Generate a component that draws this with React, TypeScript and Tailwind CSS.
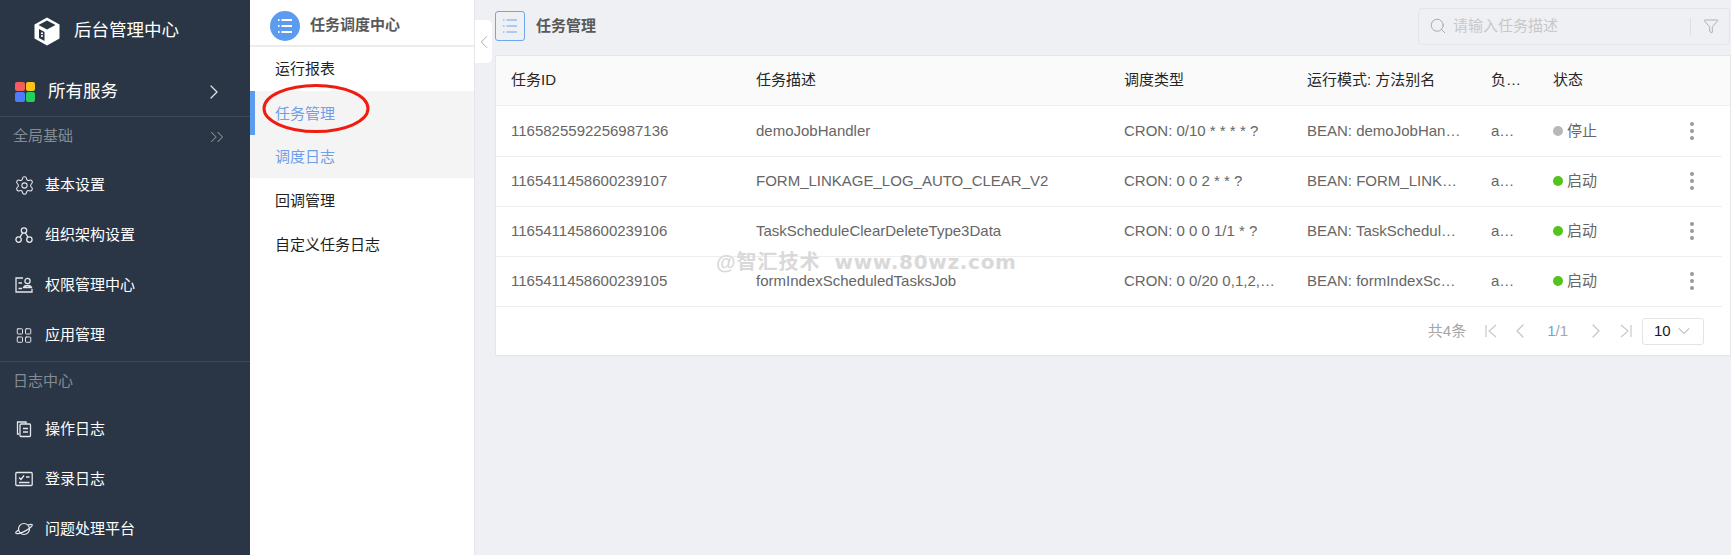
import { ChevronRight, ChevronsRight, ChevronLeft, ChevronDown, Settings, Search, Filter, LayoutGrid } from "lucide-react";
import type { ReactNode } from "react";

const FONT = "font-['Liberation_Sans','Noto_Sans_CJK_SC',sans-serif]";

const CubeLogo = () => (
  <svg width="26" height="29" viewBox="0 0 26 29" fill="none" className="mt-[2px]">
    <path d="M13 0.5 L25.5 7.5 V21.5 L13 28.5 L0.5 21.5 V7.5 Z" fill="#fff" />
    <path d="M13 3.5 L21.5 8 L13 12.5 L4.5 8 Z" fill="#2a3645" />
    <path d="M5 12 L10.5 15 V24 L5 21 Z" fill="#2a3645" />
    <rect x="7" y="15.5" width="2" height="1.6" fill="#fff" />
    <rect x="7" y="18.2" width="2" height="1.6" fill="#fff" />
  </svg>
);

const ServiceGrid = () => (
  <div className="grid grid-cols-2 gap-[1px] w-[20px] h-[20px]">
    <span className="rounded-[2px] bg-[#f55d5d]" />
    <span className="rounded-[2px] bg-[#fcc419]" />
    <span className="rounded-[2px] bg-[#4c7dfb]" />
    <span className="rounded-[2px] bg-[#22d15a]" />
  </div>
);

const OrgIcon = () => (
  <svg width="18" height="18" viewBox="0 0 18 18" fill="none" stroke="#e5e7eb" strokeWidth="1.3">
    <circle cx="9" cy="4.5" r="2.7" />
    <circle cx="3.6" cy="13.6" r="2.7" />
    <circle cx="14.4" cy="13.6" r="2.7" />
    <path d="M7.6 7 L5 11.2 M10.4 7 L13 11.2" />
  </svg>
);

const PermIcon = () => (
  <svg width="18" height="18" viewBox="0 0 18 18" fill="none" stroke="#e5e7eb" strokeWidth="1.3">
    <path d="M8 2 H1 V16 H17 V13" />
    <circle cx="12.5" cy="5" r="2.6" />
    <path d="M8.5 11.5 C9.5 8.8 15.5 8.8 16.5 11.5 Z" />
    <path d="M3.5 7 H7 M3.5 12.5 H7" />
  </svg>
);

const LogIcon = () => (
  <svg width="18" height="18" viewBox="0 0 18 18" fill="none" stroke="#e5e7eb" strokeWidth="1.3">
    <path d="M4 14 H2.5 V2 H11 V4" />
    <rect x="5" y="4" width="10.5" height="12.5" rx="1" />
    <path d="M8 8.5 H13 M8 12 H13" />
  </svg>
);

const LoginIcon = () => (
  <svg width="18" height="16" viewBox="0 0 18 16" fill="none" stroke="#e5e7eb" strokeWidth="1.3">
    <rect x="0.8" y="1.5" width="16.4" height="13" rx="1" />
    <path d="M4 6.5 L6 8.5 L9 4.5 M11 6 H14.5 M4 11.5 H14.5" />
  </svg>
);

const PlanetIcon = () => (
  <svg width="19" height="16" viewBox="0 0 19 16" fill="none" stroke="#e5e7eb" strokeWidth="1.3">
    <circle cx="9.5" cy="8" r="5.8" />
    <path d="M4.2 8.8 C1.8 10.2 0.4 11.6 0.9 12.4 C1.7 13.6 6.4 12.6 11 10 C15.6 7.4 18.9 4.6 18.1 3.5 C17.6 2.8 16 3 14 3.7" />
  </svg>
);

const ListIcon = ({ color, size, weight }: { color: string; size: number; weight: number }) => (
  <svg width={size} height={size} viewBox="0 0 18 18" fill="none" stroke={color} strokeWidth={weight}>
    <path d="M5.5 3 H16 M5.5 9 H16 M5.5 15 H16 M2 3 H3.5 M2 9 H3.5 M2 15 H3.5" />
  </svg>
);

const Kebab = () => (
  <div className="flex flex-col gap-[3.5px]">
    <span className="w-[3.5px] h-[3.5px] rounded-full bg-[#999999]" />
    <span className="w-[3.5px] h-[3.5px] rounded-full bg-[#999999]" />
    <span className="w-[3.5px] h-[3.5px] rounded-full bg-[#999999]" />
  </div>
);

const NavItem = ({ icon, label }: { icon: ReactNode; label: string }) => (
  <div className="flex items-center h-[50px] pl-[15px]">
    <span className="w-[18px] flex justify-center">{icon}</span>
    <span className="ml-[12px] text-[15px] text-white">{label}</span>
  </div>
);

const rows = [
  {
    id: "1165825592256987136",
    desc: "demoJobHandler",
    cron: "CRON: 0/10 * * * * ?",
    bean: "BEAN: demoJobHandler",
    on: false,
  },
  {
    id: "1165411458600239107",
    desc: "FORM_LINKAGE_LOG_AUTO_CLEAR_V2",
    cron: "CRON: 0 0 2 * * ?",
    bean: "BEAN: FORM_LINKAGE_LOG_AUTO_CLEAR_V2",
    on: true,
  },
  {
    id: "1165411458600239106",
    desc: "TaskScheduleClearDeleteType3Data",
    cron: "CRON: 0 0 0 1/1 * ?",
    bean: "BEAN: TaskScheduleClearDeleteType3Data",
    on: true,
  },
  {
    id: "1165411458600239105",
    desc: "formIndexScheduledTasksJob",
    cron: "CRON: 0 0/20 0,1,2,3,4,5 * * ?",
    bean: "BEAN: formIndexScheduledTasksJob",
    on: true,
  },
];

const gridCols = "grid grid-cols-[245px_368px_183px_184px_62px_137px_1fr] items-center";

const App = () => {
  return (
    <div className={`${FONT} relative flex w-[1731px] h-[555px] overflow-hidden bg-[#eef0f4]`}>
      {/* dark sidebar */}
      <aside className="w-[250px] shrink-0 bg-[#2a3645] text-white">
        <div className="flex items-center h-[60px] pl-[34px]">
          <CubeLogo />
          <span className="ml-[14px] text-[17.5px]">后台管理中心</span>
        </div>
        <div className="flex items-center justify-between h-[57px] pt-[7px] pl-[15px] pr-[24px] border-b border-[#3d4958]">
          <div className="flex items-center">
            <ServiceGrid />
            <span className="ml-[13px] text-[17.5px]">所有服务</span>
          </div>
          <ChevronRight size={24} strokeWidth={1.2} className="text-[#e5e7eb]" />
        </div>
        <div className="flex items-center justify-between h-[43px] pl-[13px] pr-[22px] pb-[4px] text-[15px] text-[#858b93]">
          <span>全局基础</span>
          <ChevronsRight size={22} strokeWidth={1.1} />
        </div>
        <NavItem icon={<Settings size={21} strokeWidth={1.2} className="shrink-0 text-[#e5e7eb]" />} label="基本设置" />
        <NavItem icon={<OrgIcon />} label="组织架构设置" />
        <NavItem icon={<PermIcon />} label="权限管理中心" />
        <NavItem icon={<LayoutGrid size={19} strokeWidth={1.3} className="text-[#e5e7eb]" />} label="应用管理" />
        <div className="flex items-center h-[43px] mt-[1px] pl-[13px] pb-[3px] border-t border-[#3d4958] text-[15px] text-[#858b93]">
          日志中心
        </div>
        <NavItem icon={<LogIcon />} label="操作日志" />
        <NavItem icon={<LoginIcon />} label="登录日志" />
        <NavItem icon={<PlanetIcon />} label="问题处理平台" />
      </aside>

      {/* sub menu */}
      <nav className="w-[225px] shrink-0 bg-white border-r border-[#e4e6eb] text-[15px] text-[#1f1f1f]">
        <div className="flex items-center h-[47px] pt-[6px] pl-[20px] border-b-2 border-[#ececec]">
          <span className="flex items-center justify-center w-[30px] h-[30px] rounded-full bg-[#5b9cf0]">
            <ListIcon color="#fff" size={18} weight={2} />
          </span>
          <span className="ml-[10px] font-bold text-[#595959]">任务调度中心</span>
        </div>
        <div className="flex items-center h-[44px] pt-[1px] pl-[25px]">运行报表</div>
        <div className="bg-[#f4f4f5] text-[#6f9fe8]">
          <div className="flex items-center h-[44px] pt-[2px] pl-[20px] border-l-[5px] border-[#5b9cf0]">任务管理</div>
          <div className="flex items-center h-[43px] pt-[2px] pl-[25px]">调度日志</div>
        </div>
        <div className="flex items-center h-[44px] pt-[2px] pl-[25px]">回调管理</div>
        <div className="flex items-center h-[44px] pt-[2px] pl-[25px]">自定义任务日志</div>
      </nav>

      {/* main area */}
      <main className="flex-1 min-w-0 pl-[20px]">
        <div className="flex items-center justify-between h-[55px] pb-[3px]">
          <div className="flex items-center">
            <span className="flex items-center justify-center w-[30px] h-[30px] rounded-[3px] border border-[#6fa4ee]">
              <ListIcon color="#6fa4ee" size={18} weight={1} />
            </span>
            <span className="ml-[11px] text-[15px] font-bold text-[#595959]">任务管理</span>
          </div>
          <div className="flex items-center w-[312px] h-[37px] mr-[1px] pl-[10px] rounded-[4px] border border-[#e3e5ea] text-[15px] text-[#c8c8c8]">
            <Search size={18} strokeWidth={1.3} className="text-[#a8a8a8]" />
            <span className="ml-[6px] flex-1">请输入任务描述</span>
            <span className="w-px h-[17px] bg-[#dcdee3]" />
            <Filter size={16} strokeWidth={1.2} className="ml-[12px] mr-[10px] text-[#a0a0a0]" />
          </div>
        </div>

        <div className="w-[1236px] h-[301px] bg-white border border-[#e4e6eb] text-[15px]">
          <div className={`${gridCols} h-[50px] pl-[15px] bg-[#fafafa] border-b border-[#eeeeee] text-[#262626]`}>
            <span>任务ID</span>
            <span>任务描述</span>
            <span>调度类型</span>
            <span className="truncate whitespace-nowrap">运行模式: 方法别名</span>
            <span className="truncate pr-[30px]">负责人</span>
            <span>状态</span>
            <span />
          </div>
          {rows.map((row, i) => (
            <div
              key={row.id}
              className={`${gridCols} ${i === 0 ? "h-[51px]" : "h-[50px] pb-[1px]"} mr-[8px] pl-[15px] border-b border-[#eeeeee] text-[#666666] last:mr-0`}
            >
              <span>{row.id}</span>
              <span className="truncate pr-[30px]">{row.desc}</span>
              <span className="truncate pr-[30px]">{row.cron}</span>
              <span className="truncate pr-[30px]">{row.bean}</span>
              <span className="truncate pr-[36px]">admin</span>
              <span className="flex items-center">
                <span className={`w-[10px] h-[10px] rounded-full ${row.on ? "bg-[#52c41a]" : "bg-[#b8b8b8]"}`} />
                <span className="ml-[4px]">{row.on ? "启动" : "停止"}</span>
              </span>
              <span>
                <Kebab />
              </span>
            </div>
          ))}
          <div className="flex items-center justify-end h-[48px] pr-[26px] text-[#a6a6a6]">
            <span>共4条</span>
            <svg className="ml-[19px]" width="12" height="14" viewBox="0 0 12 14" fill="none" stroke="#c9c9c9" strokeWidth="1.2">
              <path d="M1 1 V13 M11 1 L4 7 L11 13" />
            </svg>
            <ChevronLeft size={24} strokeWidth={1.2} className="ml-[11px] text-[#c4c4c4]" />
            <span className="ml-[15px]">
              <span className="text-[#6f9fe8]">1</span>/1
            </span>
            <ChevronRight size={24} strokeWidth={1.2} className="ml-[16px] text-[#c4c4c4]" />
            <svg className="ml-[12px]" width="12" height="14" viewBox="0 0 12 14" fill="none" stroke="#c9c9c9" strokeWidth="1.2">
              <path d="M11 1 V13 M1 1 L8 7 L1 13" />
            </svg>
            <div className="flex items-center justify-between ml-[10px] w-[62px] h-[27px] pl-[11px] pr-[9px] rounded-[3px] border border-[#e4e4e4] text-[#1a1a1a]">
              <span>10</span>
              <ChevronDown size={20} strokeWidth={1} className="text-[#8c8c8c]" />
            </div>
          </div>
        </div>
      </main>

      {/* collapse tab */}
      <div className="absolute left-[475px] top-[20px] flex items-center justify-center w-[17px] h-[43px] bg-white rounded-r-[5px]">
        <ChevronLeft size={22} strokeWidth={1} className="shrink-0 text-[#a6a6a6]" />
      </div>

      {/* red annotation */}
      <svg className="absolute left-[261px] top-[83px]" width="110" height="52" viewBox="0 0 110 52" fill="none">
        <ellipse cx="55" cy="25.5" rx="52" ry="23" stroke="#f01c10" strokeWidth="3" />
      </svg>

      {/* watermark */}
      <div className="absolute left-[716px] top-[249px] flex gap-[14px] text-[20px] leading-[26px] font-bold whitespace-nowrap text-[#d9d9d9] pointer-events-none">
        <span className="tracking-[1px]">@智汇技术</span>
        <span className="font-['DejaVu_Sans',sans-serif] tracking-[0.7px]">www.80wz.com</span>
      </div>
    </div>
  );
};

export default App;
